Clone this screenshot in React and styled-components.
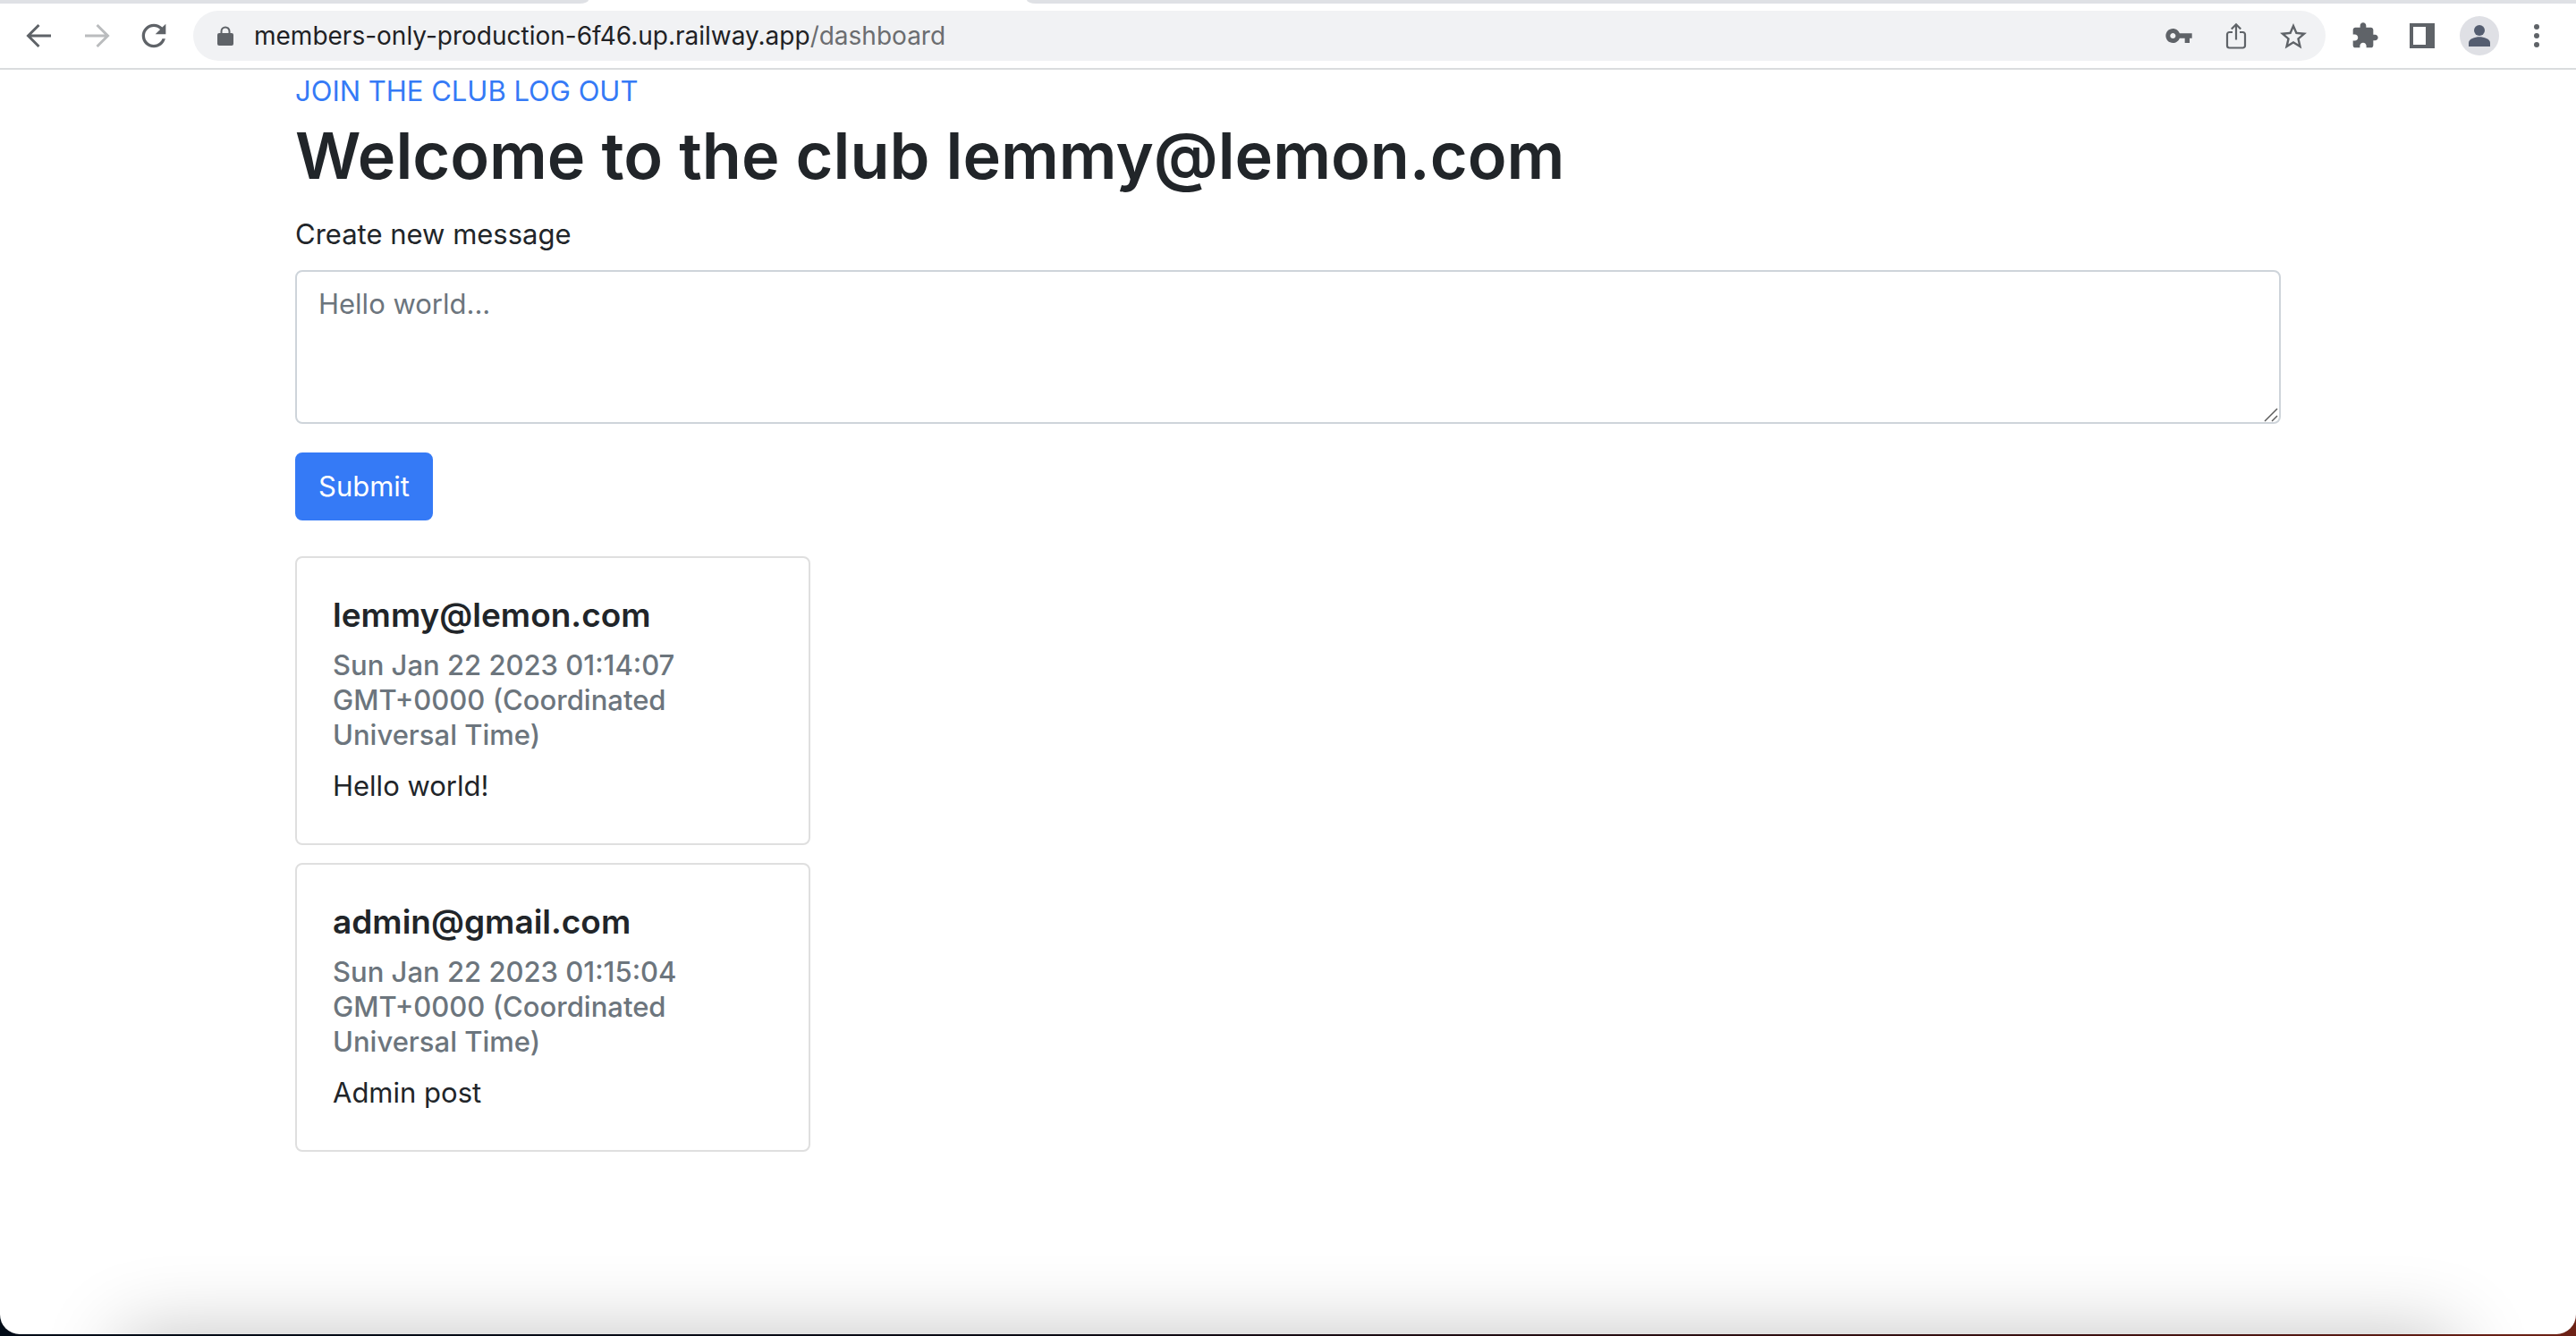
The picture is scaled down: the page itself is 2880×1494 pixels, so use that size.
import React from "react";
import styled, { createGlobalStyle } from "styled-components";

const GlobalStyle = createGlobalStyle`
  *, *::before, *::after { box-sizing: border-box; }
  body {
    margin: 0;
    background: #fff;
    color: #212529;
    font-family: Inter, "Liberation Sans", sans-serif;
    font-size: 31px;
    line-height: 48px;
  }
`;

const Desktop = styled.div`
  display: flex;
  flex-direction: column;
  min-height: 100vh;
  padding-bottom: 2px;
  background: linear-gradient(90deg, #020c18 0%, #0a0a14 40%, #3a0f10 80%, #6e2216 100%);
`;

const Window = styled.div`
  position: relative;
  flex: 1;
  overflow: hidden;
  background: #fff;
  border-radius: 0 0 22px 22px;

  &::after {
    content: "";
    position: absolute;
    top: 100%;
    left: 136px;
    right: 136px;
    height: 200px;
    box-shadow: 0 0 88px rgba(0, 0, 0, 0.24);
    pointer-events: none;
  }
`;

const TabStrip = styled.div`
  display: grid;
  grid-template-columns: 658px 490px 1fr;
  height: 4px;
`;

const InactiveTabs = styled.div`
  background: #dfe1e5;
  border-radius: ${(p) => (p.$side === "left" ? "0 0 10px 0 / 0 0 4px 0" : "0 0 0 10px / 0 0 0 4px")};
`;

const Toolbar = styled.div`
  display: flex;
  align-items: center;
  padding: 8px 12px;
  border-bottom: 2px solid #dadcde;
`;

const IconButton = styled.button`
  display: flex;
  align-items: center;
  justify-content: center;
  flex: none;
  width: 64px;
  height: 56px;
  padding: 0;
  border: 0;
  background: none;
  color: ${(p) => p.$tone || "#5f6368"};
`;

const AddressBar = styled.div`
  display: flex;
  align-items: center;
  flex: 1;
  height: 56px;
  margin: 0 12px;
  padding: 0 4px 0 20px;
  border-radius: 28px;
  background: #f1f2f4;
  color: #5f6368;
`;

const Url = styled.div`
  flex: 1;
  padding-left: 16px;
  color: #6b6d70;
  font-size: 28px;
  white-space: nowrap;
`;

const Host = styled.span`
  color: #202124;
`;

const Avatar = styled.span`
  display: flex;
  width: 44px;
  height: 44px;
  border-radius: 50%;
  background: #dfe0e5;
  color: #545d70;
`;

const Page = styled.main`
  max-width: 2280px;
  margin: 0 auto;
  padding: 0 30px 200px;
`;

const NavLink = styled.a`
  color: #357af6;
  text-decoration: none;
`;

const Heading = styled.h1`
  margin: 0 0 16px;
  font-size: 72px;
  font-weight: 600;
  line-height: 96px;
`;

const MessageForm = styled.form`
  display: flex;
  flex-direction: column;
  align-items: flex-start;
`;

const Label = styled.label`
  margin-bottom: 16px;
`;

const TextBox = styled.div`
  position: relative;
  width: 100%;
  margin-bottom: 32px;
`;

const TextArea = styled.textarea`
  display: block;
  width: 100%;
  height: 172px;
  padding: 12px 24px;
  border: 2px solid #ced4da;
  border-radius: 8px;
  background: #fff;
  color: #495057;
  font: inherit;
  resize: none;

  &::placeholder {
    color: #6c757d;
    opacity: 1;
  }
`;

const Grip = styled.svg`
  position: absolute;
  right: 3px;
  bottom: 2px;
`;

const SubmitButton = styled.button`
  padding: 12px 24px;
  border: 2px solid #357af6;
  border-radius: 8px;
  background: #357af6;
  color: #fff;
  font: inherit;
`;

const CardList = styled.section`
  display: flex;
  flex-direction: column;
  gap: 20px;
  margin-top: 40px;
`;

const Card = styled.article`
  width: 576px;
  padding: 40px;
  border: 2px solid #dfdfdf;
  border-radius: 8px;
`;

const CardTitle = styled.h5`
  margin: 0 0 12px;
  font-size: 37px;
  font-weight: 600;
  line-height: 48px;
`;

const CardDate = styled.h6`
  margin: 0 0 14px;
  color: #6c757d;
  font-size: 31px;
  font-weight: 500;
  line-height: 39px;
`;

const CardText = styled.p`
  margin: 0;
`;

const messages = [
  {
    author: "lemmy@lemon.com",
    date: "Sun Jan 22 2023 01:14:07 GMT+0000 (Coordinated Universal Time)",
    text: "Hello world!",
  },
  {
    author: "admin@gmail.com",
    date: "Sun Jan 22 2023 01:15:04 GMT+0000 (Coordinated Universal Time)",
    text: "Admin post",
  },
];

const ArrowIcon = ({ flip }) => (
  <svg width="32" height="32" viewBox="0 0 32 32" fill="none" stroke="currentColor" strokeWidth="3">
    <path d={flip ? "M3 16H28M16.5 4L28.5 16L16.5 28" : "M29 16H4M15.5 4L3.5 16L15.5 28"} />
  </svg>
);

const Glyph = ({ size, d, box = "0 0 24 24" }) => (
  <svg width={size} height={size} viewBox={box} fill="currentColor">
    <path d={d} fillRule="evenodd" />
  </svg>
);

const REFRESH =
  "M17.65 6.35C16.2 4.9 14.21 4 12 4c-4.42 0-7.99 3.58-7.99 8s3.57 8 7.99 8c3.73 0 6.84-2.55 7.73-6h-2.08c-.82 2.33-3.04 4-5.65 4-3.31 0-6-2.69-6-6s2.69-6 6-6c1.66 0 3.14.69 4.22 1.78L13 11h7V4l-2.35 2.35z";
const KEY =
  "M12.65 10C11.83 7.67 9.61 6 7 6c-3.31 0-6 2.69-6 6s2.69 6 6 6c2.61 0 4.83-1.67 5.65-4H17v4h4v-4h2v-4H12.65zM7 14.3c-1.27 0-2.3-1.03-2.3-2.3s1.03-2.3 2.3-2.3 2.3 1.03 2.3 2.3-1.03 2.3-2.3 2.3z";
const STAR =
  "M22 9.24l-7.19-.62L12 2 9.19 8.63 2 9.24l5.46 4.73L5.82 21 12 17.27 18.18 21l-1.63-7.03L22 9.24zM12 15.4l-3.76 2.27 1-4.28-3.32-2.88 4.38-.38L12 6.1l1.71 4.04 4.38.38-3.32 2.88 1 4.28L12 15.4z";
const PUZZLE =
  "M20.5 11H19V7c0-1.1-.9-2-2-2h-4V3.5C13 2.12 11.88 1 10.5 1S8 2.12 8 3.5V5H4c-1.1 0-1.99.9-1.99 2v3.8H3.5c1.49 0 2.7 1.21 2.7 2.7s-1.21 2.7-2.7 2.7H2V20c0 1.1.9 2 2 2h3.8v-1.5c0-1.49 1.21-2.7 2.7-2.7 1.49 0 2.7 1.21 2.7 2.7V22H17c1.1 0 2-.9 2-2v-4h1.5c1.38 0 2.5-1.12 2.5-2.5S21.88 11 20.5 11z";

function BrowserToolbar() {
  return (
    <Toolbar>
      <IconButton aria-label="Back"><ArrowIcon /></IconButton>
      <IconButton aria-label="Forward" $tone="#babcbe"><ArrowIcon flip /></IconButton>
      <IconButton aria-label="Reload"><Glyph size={40} d={REFRESH} /></IconButton>
      <AddressBar>
        <svg width="32" height="32" viewBox="0 0 32 32">
          <rect x="7" y="13" width="18" height="14" rx="2" fill="currentColor" />
          <path d="M11.5 14V11a4.5 4.5 0 0 1 9 0V14" fill="none" stroke="currentColor" strokeWidth="2" />
        </svg>
        <Url><Host>members-only-production-6f46.up.railway.app</Host>/dashboard</Url>
        <IconButton aria-label="Passwords"><Glyph size={32} d={KEY} /></IconButton>
        <IconButton aria-label="Share">
          <svg width="32" height="32" viewBox="0 0 32 32" fill="none" stroke="currentColor" strokeWidth="2.2">
            <path d="M12 12H8.500A2.500 2.500 0 0 0 6 14.500V27A2.500 2.500 0 0 0 8.500 29.500H23.500A2.500 2.500 0 0 0 26 27V14.500A2.500 2.500 0 0 0 23.500 12H20" />
            <path d="M16 20.500V4M10.800 8.500L16 3.300L21.200 8.500" />
          </svg>
        </IconButton>
        <IconButton aria-label="Bookmark"><Glyph size={36} d={STAR} box="0 -0.6 24 24" /></IconButton>
      </AddressBar>
      <IconButton aria-label="Extensions"><Glyph size={32} d={PUZZLE} /></IconButton>
      <IconButton aria-label="Side panel"><Glyph size={28} d="M0 0H28V28H0zM4 4V24H18V4z" box="0 0 28 28" /></IconButton>
      <IconButton aria-label="Profile">
        <Avatar>
          <svg width="44" height="44" viewBox="0 0 44 44" fill="currentColor">
            <circle cx="22" cy="16" r="6" />
            <path d="M10 34V30C10 25.500 17 23.300 22 23.300S34 25.500 34 30V34Z" />
          </svg>
        </Avatar>
      </IconButton>
      <IconButton aria-label="Menu">
        <svg width="32" height="32" viewBox="0 0 32 32" fill="currentColor">
          <circle cx="16" cy="6" r="3" />
          <circle cx="16" cy="16" r="3" />
          <circle cx="16" cy="26" r="3" />
        </svg>
      </IconButton>
    </Toolbar>
  );
}

export default function App() {
  return (
    <Desktop>
      <GlobalStyle />
      <Window>
        <TabStrip>
          <InactiveTabs $side="left" />
          <div />
          <InactiveTabs $side="right" />
        </TabStrip>
        <BrowserToolbar />
        <Page>
          <nav>
            <NavLink href="#join">JOIN THE CLUB</NavLink> <NavLink href="#logout">LOG OUT</NavLink>
          </nav>
          <Heading>Welcome to the club lemmy@lemon.com</Heading>
          <MessageForm onSubmit={(e) => e.preventDefault()}>
            <Label htmlFor="message">Create new message</Label>
            <TextBox>
              <TextArea id="message" placeholder="Hello world..." />
              <Grip width="16" height="16" viewBox="0 0 16 16" stroke="#5c5c5c" strokeWidth="1.5" aria-hidden="true">
                <path d="M1 15L15 1M9 15L15 9" />
              </Grip>
            </TextBox>
            <SubmitButton type="submit">Submit</SubmitButton>
          </MessageForm>
          <CardList>
            {messages.map((m) => (
              <Card key={m.author}>
                <CardTitle>{m.author}</CardTitle>
                <CardDate>{m.date}</CardDate>
                <CardText>{m.text}</CardText>
              </Card>
            ))}
          </CardList>
        </Page>
      </Window>
    </Desktop>
  );
}
